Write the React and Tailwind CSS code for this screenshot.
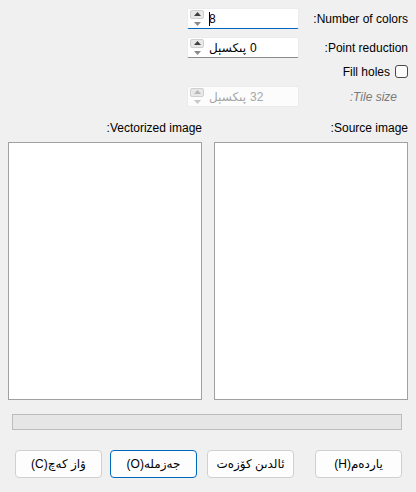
import React from "react";

const font = { fontFamily: '"Segoe UI", "Liberation Sans", "DejaVu Sans", sans-serif' };

function Arrows({ disabled }) {
  const c = disabled ? "text-[#b8b8b8]" : "text-[#404040]";
  return (
    <div className="flex flex-col gap-[1px] pl-[2px] pt-[1px]">
      <div className={`w-[14px] h-[9px] bg-[#e8e8e8] border border-[#d0d0d0] rounded-[2px] flex items-center justify-center ${c}`}>
        <svg width="7" height="4" viewBox="0 0 7 4"><path d="M0 4 L3.5 0 L7 4 Z" fill="currentColor" /></svg>
      </div>
      <div className={`w-[14px] h-[9px] flex items-center justify-center ${disabled ? "text-[#c8c8c8]" : "text-[#8a8a8a]"}`}>
        <svg width="7" height="4" viewBox="0 0 7 4"><path d="M0 0 L3.5 4 L7 0 Z" fill="currentColor" /></svg>
      </div>
    </div>
  );
}

function SpinBox({ value, unit, focused, disabled, cursor }) {
  const border = disabled
    ? "border border-[#ebebeb] bg-[#fcfcfc]"
    : focused
    ? "bg-white border border-[#ececec] border-b-[#0067c0] border-b-[1.5px]"
    : "bg-white border border-[#ececec] border-b-[#8a8a8a]";
  return (
    <div className={`w-[112px] h-full flex items-stretch rounded-[2px] ${border}`}>
      <Arrows disabled={disabled} />
      <div className={`flex items-center pl-[5px] text-[12px] ${disabled ? "text-[#a6a6a6]" : "text-black"}`}>
        {cursor && <span className="w-[1px] h-[14px] bg-black mr-[-1px]" />}
        {unit && <span>{unit}</span>}
        {unit && <span className="w-[4px]" />}
        <span>{value}</span>
      </div>
    </div>
  );
}

function Label({ children, muted }) {
  return (
    <div dir="rtl" className={`flex-1 text-right text-[12px] ${muted ? "italic text-[#7a7a7a] pr-[11px]" : "text-black"}`}>
      {children}
    </div>
  );
}

function Btn({ children, primary, className = "" }) {
  return (
    <button
      dir="rtl"
      className={`w-[87px] h-[28px] rounded-[4px] bg-[#fdfdfd] text-[12px] text-black flex items-center justify-center ${
        primary ? "border border-[#0067c0]" : "border border-[#d0d0d0]"
      } ${className}`}
    >
      {children}
    </button>
  );
}

export default function App() {
  return (
    <div style={font} className="w-[416px] h-[492px] bg-[#f0f0f0] overflow-hidden flex flex-col">
      <div className="flex flex-col pt-[8px] pl-[187px] pr-[8px]">
        <div className="h-[21px] flex items-center">
          <SpinBox value="8" focused cursor />
          <Label>Number of colors:</Label>
        </div>
        <div className="h-[21px] mt-[8px] flex items-center">
          <SpinBox value="0" unit="پىكسېل" />
          <Label>Point reduction:</Label>
        </div>
        <div className="h-[13px] mt-[7px] flex items-center justify-end gap-[5px]">
          <span className="text-[12px] text-black">Fill holes</span>
          <span className="w-[13px] h-[13px] border border-[#4a4a4a] rounded-[3px] bg-[#fbfbfb]" />
        </div>
        <div className="h-[21px] mt-[8px] flex items-center">
          <SpinBox value="32" unit="پىكسېل" disabled />
          <Label muted>Tile size:</Label>
        </div>
      </div>

      <div className="mt-[13px] px-[8px] grid grid-cols-[194px_194px] gap-x-[12px]">
        <div dir="rtl" className="text-right text-[12px] text-black h-[16px] leading-[16px]">Vectorized image:</div>
        <div dir="rtl" className="text-right text-[12px] text-black h-[16px] leading-[16px]">Source image:</div>
        <div className="mt-[6px] h-[258px] bg-white border border-[#a0a0a0]" />
        <div className="mt-[6px] h-[258px] bg-white border border-[#a0a0a0]" />
      </div>

      <div className="mt-[14px] ml-[12px] mr-[14px] h-[16px] bg-[#e6e6e6] border border-[#bcbcbc]" />

      <div className="mt-[20px] flex pl-[15px]">
        <Btn>ۋاز كەچ(C)</Btn>
        <Btn primary className="ml-[8px]">جەزملە(O)</Btn>
        <Btn className="ml-[10px]">ئالدىن كۆزەت</Btn>
        <Btn className="ml-[21px]">ياردەم(H)</Btn>
      </div>
    </div>
  );
}
